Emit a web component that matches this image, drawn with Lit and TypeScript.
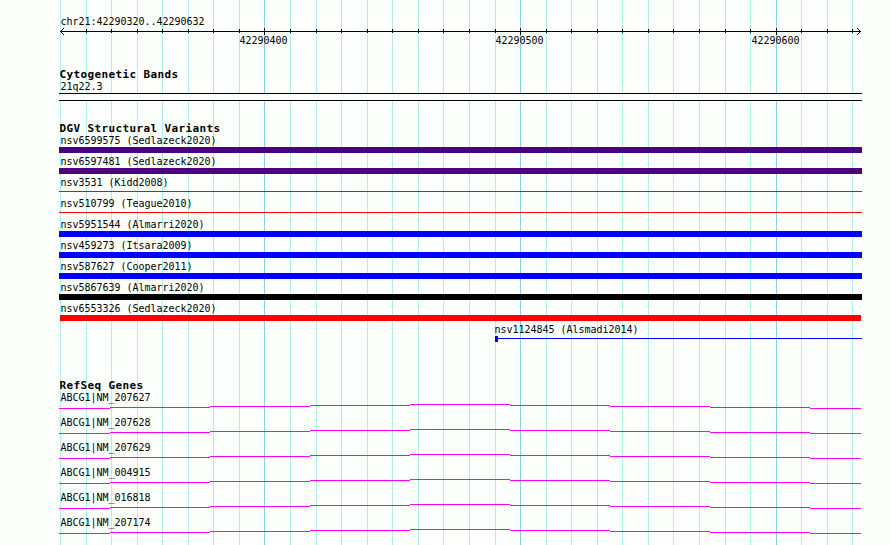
import { LitElement, html, svg, css } from 'lit';
import { customElement, property } from 'lit/decorators.js';
import { styleMap } from 'lit/directives/style-map.js';

interface Variant {
  label: string;
  color: string;
  thin?: boolean;
  start?: number;
  inset?: number;
}

const START = 42290320;
const PX_PER_BASE = 800 / 313;

// x position of every tenth base, counted from the first one
const ticks = Array.from({ length: 32 }, (_, i) => ({
  x: Math.round(60 + i * 10 * PX_PER_BASE),
  major: (START + i * 10) % 100 === 0,
  base: START + i * 10,
}));

const variants: Variant[] = [
  { label: 'nsv6599575 (Sedlazeck2020)', color: '#4b0082' },
  { label: 'nsv6597481 (Sedlazeck2020)', color: '#4b0082' },
  { label: 'nsv3531 (Kidd2008)', color: '#ff0000', thin: true },
  { label: 'nsv510799 (Teague2010)', color: '#ff0000', thin: true },
  { label: 'nsv5951544 (Almarri2020)', color: '#0000ff' },
  { label: 'nsv459273 (Itsara2009)', color: '#0000ff' },
  { label: 'nsv587627 (Cooper2011)', color: '#0000ff' },
  { label: 'nsv5867639 (Almarri2020)', color: '#000000' },
  { label: 'nsv6553326 (Sedlazeck2020)', color: '#ff0000', inset: 1 },
  { label: 'nsv1124845 (Alsmadi2014)', color: '#0000ff', thin: true, start: 436 },
];

const genes = ['NM_207627', 'NM_207628', 'NM_207629', 'NM_004915', 'NM_016818', 'NM_207174'];

@customElement('grid-lines')
export class GridLines extends LitElement {
  static styles = css`
    :host {
      display: block;
    }
    svg {
      display: block;
    }
    .minor {
      fill: #afeeee;
    }
    .major {
      fill: #87ceeb;
    }
  `;

  render() {
    return html`
      <svg width="890" height="545" shape-rendering="crispEdges">
        ${ticks.map((t) => svg`<rect class=${t.major ? 'major' : 'minor'} x=${t.x} y="0" width="1" height="545" />`)}
      </svg>
    `;
  }
}

@customElement('scale-ruler')
export class ScaleRuler extends LitElement {
  static styles = css`
    :host {
      display: block;
    }
    svg {
      display: block;
    }
    text {
      font: 10px 'DejaVu Sans Mono', monospace;
      letter-spacing: -0.02px;
    }
  `;

  render() {
    return html`
      <svg width="803" height="22" viewBox="59 28 803 22">
        <g shape-rendering="crispEdges">
          <rect x="60" y="31" width="801" height="1" />
          ${ticks.slice(1).map((t) => svg`
            <rect x=${t.x} y=${t.major ? 28 : 29} width="1" height=${t.major ? 7 : 4} />
          `)}
          ${[1, 2, 3].map((d) => svg`
            <rect x=${60 + d} y=${31 - d} width="1" height="1" />
            <rect x=${60 + d} y=${31 + d} width="1" height="1" />
            <rect x=${860 - d} y=${31 - d} width="1" height="1" />
            <rect x=${860 - d} y=${31 + d} width="1" height="1" />
          `)}
        </g>
        ${ticks.filter((t) => t.major).map((t) => svg`<text x=${t.x - 24.5} y="44">${t.base}</text>`)}
      </svg>
    `;
  }
}

@customElement('variant-row')
export class VariantRow extends LitElement {
  @property({ attribute: false }) variant!: Variant;

  static styles = css`
    :host {
      display: block;
    }
    .label {
      height: 12px;
      padding-left: 1.5px;
      line-height: 12px;
      white-space: pre;
    }
    .label.shifted {
      padding-left: 0;
      margin-left: -0.5px;
    }
    .glyph {
      display: flex;
      height: 6px;
    }
    .bar {
      flex: 1;
      background: currentColor;
    }
    .bar.thin {
      height: 1px;
      margin-top: 2px;
    }
    .cap {
      width: 3px;
      background: currentColor;
    }
  `;

  render() {
    const { label, color, thin, start, inset } = this.variant;
    const pad = inset ?? 0;
    return html`
      <div style=${styleMap({ paddingLeft: `${start ?? 0}px` })}>
        <div class="label ${start ? 'shifted' : ''}">${label}</div>
        <div class="glyph" style=${styleMap({ color, padding: `0 ${pad}px` })}>
          ${start ? html`<div class="cap"></div>` : ''}
          <div class="bar ${thin ? 'thin' : ''}"></div>
        </div>
      </div>
    `;
  }
}

@customElement('gene-row')
export class GeneRow extends LitElement {
  @property() name = '';

  static styles = css`
    :host {
      display: block;
    }
    .label {
      height: 12px;
      padding-left: 1.5px;
      line-height: 12px;
    }
    svg {
      display: block;
      fill: #ff00ff;
    }
  `;

  render() {
    // the intron line climbs one pixel per step up to the middle, then drops again
    const edges = [59, 110, 210, 310, 410, 510, 610, 710, 810, 861];
    return html`
      <div class="label">ABCG1|${this.name}</div>
      <svg width="803" height="5" viewBox="59 0 803 5" shape-rendering="crispEdges">
        ${edges.slice(0, -1).map((x, i) => svg`
          <rect x=${x} y=${Math.abs(4 - i)} width=${edges[i + 1] - x} height="1" />
        `)}
      </svg>
    `;
  }
}

@customElement('app-root')
export class AppRoot extends LitElement {
  static styles = css`
    :host {
      display: block;
      position: relative;
      width: 890px;
      height: 545px;
      overflow: hidden;
      background: #fdfffc;
      color: #000;
      font: 10px 'DejaVu Sans Mono', monospace;
      letter-spacing: -0.02px;
    }
    grid-lines {
      position: absolute;
      top: 0;
      left: 0;
    }
    .tracks {
      position: relative;
      box-sizing: border-box;
      width: 862px;
      padding: 16px 0 0 59px;
    }
    .label {
      height: 12px;
      padding-left: 1.5px;
      line-height: 12px;
    }
    h2 {
      height: 13px;
      margin: 0;
      padding-left: 0.5px;
      font-size: 11px;
      font-weight: bold;
      line-height: 13px;
      letter-spacing: 0.378px;
    }
    .cytoband {
      margin-top: 18px;
    }
    .band {
      box-sizing: border-box;
      height: 8px;
      border: solid #000;
      border-width: 1px 0;
      background: #fdfffc;
    }
    .variants {
      margin-top: 21px;
    }
    .variants .rows {
      display: grid;
      gap: 3px;
    }
    .genes {
      margin-top: 37px;
    }
    .genes .rows {
      display: grid;
      gap: 8px;
    }
  `;

  render() {
    return html`
      <grid-lines></grid-lines>
      <div class="tracks">
        <div class="label">chr21:42290320..42290632</div>
        <scale-ruler></scale-ruler>
        <section class="cytoband">
          <h2>Cytogenetic Bands</h2>
          <div class="label">21q22.3</div>
          <div class="band"></div>
        </section>
        <section class="variants">
          <h2>DGV Structural Variants</h2>
          <div class="rows">${variants.map((v) => html`<variant-row .variant=${v}></variant-row>`)}</div>
        </section>
        <section class="genes">
          <h2>RefSeq Genes</h2>
          <div class="rows">${genes.map((g) => html`<gene-row name=${g}></gene-row>`)}</div>
        </section>
      </div>
    `;
  }
}
